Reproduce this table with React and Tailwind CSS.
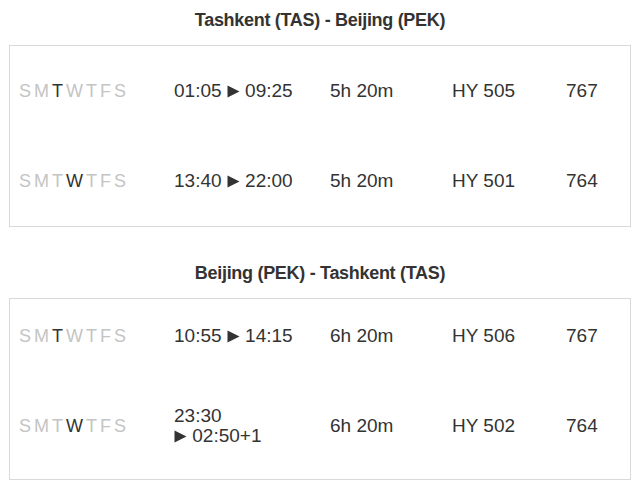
import React from "react";

const days = ["S", "M", "T", "W", "T", "F", "S"];

const sections = [
  {
    title: "Tashkent (TAS) - Beijing (PEK)",
    rows: [
      { day: 2, dep: "01:05", arr: "09:25", dur: "5h 20m", flight: "HY 505", ac: "767", h: "h-[90px]" },
      { day: 3, dep: "13:40", arr: "22:00", dur: "5h 20m", flight: "HY 501", ac: "764", h: "h-[90px]" },
    ],
  },
  {
    title: "Beijing (PEK) - Tashkent (TAS)",
    rows: [
      { day: 2, dep: "10:55", arr: "14:15", dur: "6h 20m", flight: "HY 506", ac: "767", h: "h-[74px]" },
      { day: 3, dep: "23:30", arr: "02:50+1", dur: "6h 20m", flight: "HY 502", ac: "764", h: "h-[106px]", wrap: true },
    ],
  },
];

function Tri() {
  return (
    <svg width="13" height="13" viewBox="0 0 13 13" className="inline-block align-[-1px]">
      <path d="M0.5 0.5 L12.5 6.5 L0.5 12.5 Z" fill="#333" />
    </svg>
  );
}

function Row({ r }) {
  return (
    <div className={`grid ${r.h} grid-cols-[164px_156px_122px_114px_1fr] items-center text-[19px] text-[#333]`}>
      <div className="flex pl-[9px] text-[18px] tracking-[3px]">
        {days.map((d, i) => (
          <span key={i} className={i === r.day ? "text-[#333]" : "text-[#c4c4c4]"}>
            {d}
          </span>
        ))}
      </div>
      <div className="leading-[20px]">
        {r.wrap ? (
          <>
            <div>{r.dep}</div>
            <div>
              <Tri /> {r.arr}
            </div>
          </>
        ) : (
          <div>
            {r.dep} <Tri /> {r.arr}
          </div>
        )}
      </div>
      <div>{r.dur}</div>
      <div>{r.flight}</div>
      <div>{r.ac}</div>
    </div>
  );
}

export default function App() {
  return (
    <div
      className="w-[640px] h-[492px] bg-white px-[9px] pt-[8px]"
      style={{ fontFamily: '"Liberation Sans", Arial, sans-serif' }}
    >
      {sections.map((s, i) => (
        <div key={i} className={i === 1 ? "mt-[34px]" : ""}>
          <div className="h-[24px] leading-[24px] mb-[13px] text-center text-[18px] font-bold tracking-[-0.3px] text-[#333]">
            {s.title}
          </div>
          <div className="w-[622px] border border-[#d9d9d9]">
            {s.rows.map((r, j) => (
              <Row key={j} r={r} />
            ))}
          </div>
        </div>
      ))}
    </div>
  );
}
